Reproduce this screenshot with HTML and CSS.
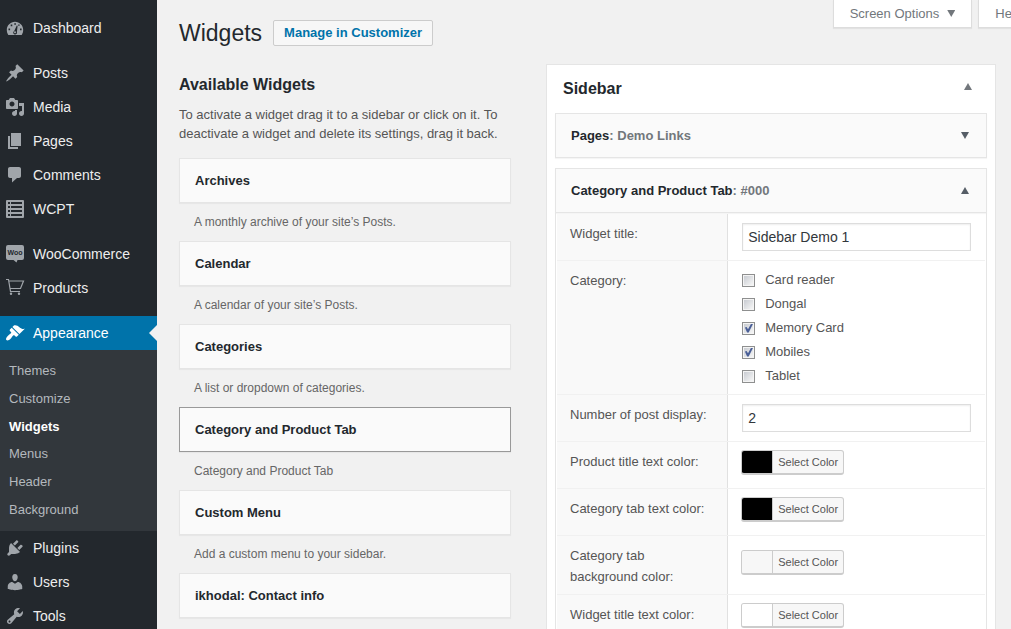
FILE: index.html
```html
<!DOCTYPE html>
<html lang="en">
<head>
<meta charset="utf-8">
<title>Widgets</title>
<link rel="stylesheet" href="styles.css">
</head>
<body>
<div class="admin">
  <nav class="menu" aria-label="Main menu">
    <ul class="menu-group">
      <li><a class="menu-item" href="#"><svg class="icon" viewBox="0 0 20 20"><path fill-rule="evenodd" d="M3.300 17h13.400c.9-1.300 1.500-3.100 1.500-4.900C18.200 7.400 14.500 3.800 10 3.800S1.800 7.400 1.800 12.100c0 1.800.6 3.600 1.500 4.900zM9.300 5.200h1.600v1.600H9.300zM5.700 6.600h1.600v1.600H5.700zM13.200 6.400h1.400v1.400h-1.400zM3.500 10.600h1.600v1.600H3.500zM15 10.600h1.600v1.600H15zM11.800 7.500l.8.300-.7 6.100a1.900 1.900 0 1 1-2.700-1z"/><circle cx="10" cy="14.200" r="1"/></svg>Dashboard</a></li>
    </ul>
    <ul class="menu-group">
      <li><a class="menu-item" href="#"><svg class="icon" viewBox="0 0 20 20"><path d="M10.440 3.020l1.820-1.820 6.360 6.350-1.830 1.820c-1.050-.68-2.480-.57-3.410.36l-.75.75c-.92.93-1.040 2.350-.35 3.410l-1.830 1.820-2.410-2.410-2.800 2.790c-.42.42-3.380 2.710-3.800 2.290s1.860-3.390 2.280-3.810l2.790-2.790L4.100 9.360l1.830-1.820c1.050.69 2.480.57 3.400-.36l.75-.75c.93-.92 1.050-2.350.36-3.410z"/></svg>Posts</a></li>
      <li><a class="menu-item" href="#"><svg class="icon" viewBox="0 0 20 20"><path fill-rule="evenodd" d="M13 11V4c0-.55-.45-1-1-1h-1.670L9 1H5L3.670 3H2c-.55 0-1 .45-1 1v7c0 .55.45 1 1 1h10c.55 0 1-.45 1-1zM7 4.500c1.380 0 2.500 1.120 2.500 2.500S8.380 9.500 7 9.500 4.500 8.380 4.500 7 5.620 4.500 7 4.500zM14 6h5v10.500c0 1.380-1.120 2.500-2.500 2.500S14 17.880 14 16.500s1.120-2.500 2.500-2.500c.17 0 .34.02.5.05V9h-3V6zm-4 8.050V13h2v3.500c0 1.380-1.120 2.500-2.500 2.500S7 17.880 7 16.500 8.120 14 9.500 14c.17 0 .34.02.5.05z"/></svg>Media</a></li>
      <li><a class="menu-item" href="#"><svg class="icon" viewBox="0 0 20 20"><path d="M6 15V2h10v13H6zm-1 1h8v2H3V5h2v11z"/></svg>Pages</a></li>
      <li><a class="menu-item" href="#"><svg class="icon" viewBox="0 0 20 20"><path d="M5 2h9c1.100 0 2 .9 2 2v7c0 1.100-.9 2-2 2h-2l-5 4.500V13H5c-1.100 0-2-.9-2-2V4c0-1.100.9-2 2-2z"/></svg>Comments</a></li>
      <li><a class="menu-item" href="#"><svg class="icon" viewBox="0 0 20 20"><path fill-rule="evenodd" d="M2 1h16q1 0 1 1v16q0 1-1 1H2q-1 0-1-1V2q0-1 1-1zM3 3v2h2V3zM6 3v2h11V3zM3 7v2h2V7zM6 7v2h11V7zM3 11v2h2v-2zM6 11v2h11v-2zM3 15v2h2v-2zM6 15v2h11v-2z"/></svg>WCPT</a></li>
    </ul>
    <ul class="menu-group">
      <li><a class="menu-item" href="#"><svg class="icon" viewBox="0 0 20 20"><path d="M3 1h14q2 0 2 2v11q0 2-2 2h-4.500l-1 2.500-3-2.500H3q-2 0-2-2V3q0-2 2-2z"/><text class="woo" x="10" y="11" text-anchor="middle">Woo</text></svg>WooCommerce</a></li>
      <li><a class="menu-item" href="#"><svg class="icon" viewBox="0 0 20 20"><path class="stroke" d="M1 1.500h2.500L5.500 13.500H15M4 3h14.500L15.500 10.500H5"/><circle cx="6" cy="15.800" r="1.200"/><circle cx="14" cy="15.800" r="1.200"/></svg>Products</a></li>
    </ul>
    <ul class="menu-group menu-group-last">
      <li><a class="menu-item menu-item-current" href="#"><svg class="icon" viewBox="0 0 20 20"><path d="M14.480 11.060L7.410 3.990l1.500-1.500c.5-.56 2.300-.47 3.510.32 1.210.8 1.430 1.280 2.910 2.100 1.180.64 2.450 1.260 4.450.85zm-.71.71L6.700 4.700 4.930 6.470c-.39.39-.39 1.020 0 1.410l1.060 1.060c.39.39.39 1.030 0 1.420-.6.6-1.430 1.110-2.210 1.690-.35.26-.7.53-1.010.84C1.430 14.230.4 16.080 1.400 17.070c.99 1 2.840-.03 4.180-1.360.31-.31.58-.66.85-1.020.57-.78 1.080-1.610 1.690-2.210.39-.39 1.020-.39 1.410 0l1.060 1.060c.39.39 1.020.39 1.410 0z"/></svg>Appearance</a>
        <ul class="submenu">
          <li><a href="#">Themes</a></li>
          <li><a href="#">Customize</a></li>
          <li><a class="submenu-current" href="#">Widgets</a></li>
          <li><a href="#">Menus</a></li>
          <li><a href="#">Header</a></li>
          <li><a href="#">Background</a></li>
        </ul>
      </li>
      <li><a class="menu-item" href="#"><svg class="icon" viewBox="0 0 20 20"><path d="M13.110 4.360L9.870 7.600 8 5.730l3.240-3.240c.35-.34 1.050-.2 1.560.32.52.51.66 1.210.31 1.550zm-8 1.770l.91-1.120 9.010 9.010-1.190.84c-.71.71-2.630 1.160-3.820 1.160H6.140L4.900 17.260c-.59.59-1.540.59-2.120 0-.59-.58-.59-1.530 0-2.120l1.240-1.240v-3.880c0-1.130.4-3.190 1.090-3.890zm7.260 3.970l3.240-3.240c.34-.35 1.040-.21 1.550.31.52.51.66 1.210.31 1.550l-3.240 3.250z"/></svg>Plugins</a></li>
      <li><a class="menu-item" href="#"><svg class="icon" viewBox="0 0 20 20"><path d="M10 9.250c-2.270 0-2.730-3.440-2.730-3.440C7 4.020 7.820 2 9.970 2c2.160 0 2.980 2.020 2.710 3.810 0 0-.41 3.440-2.680 3.440zm0 2.570L12.720 10c2.390 0 4.520 2.330 4.520 4.530v2.490s-3.650 1.130-7.240 1.130c-3.650 0-7.240-1.130-7.240-1.130v-2.490c0-2.250 1.940-4.480 4.470-4.480z"/></svg>Users</a></li>
      <li><a class="menu-item" href="#"><svg class="icon" viewBox="0 0 20 20"><path fill-rule="evenodd" d="M16.680 9.770c-1.340 1.340-3.300 1.670-4.950.99l-5.410 6.520c-.99.99-2.590.99-3.580 0s-.99-2.590 0-3.570l6.520-5.420c-.68-1.650-.35-3.610.99-4.950 1.280-1.280 3.120-1.620 4.720-1.060l-2.890 2.890 2.820 2.820 2.860-2.870c.53 1.580.18 3.390-1.080 4.650zM3.810 16.210c.4.39 1.040.39 1.430 0 .4-.4.4-1.040 0-1.430-.39-.4-1.030-.4-1.430 0-.39.39-.39 1.030 0 1.430z"/></svg>Tools</a></li>
    </ul>
  </nav>

  <main class="content">
    <header class="page-header">
      <div class="page-title">
        <h1>Widgets</h1>
        <a class="title-action" href="#">Manage in Customizer</a>
      </div>
      <div class="screen-tabs">
        <button class="screen-tab" type="button">Screen Options <span class="arrow arrow-down"></span></button>
        <button class="screen-tab" type="button">Help <span class="arrow arrow-down"></span></button>
      </div>
    </header>

    <div class="columns">
      <section class="available">
        <h2>Available Widgets</h2>
        <p class="intro">To activate a widget drag it to a sidebar or click on it. To deactivate a widget and delete its settings, drag it back.</p>
        <article><h3 class="card">Archives</h3><p class="card-note">A monthly archive of your site’s Posts.</p></article>
        <article><h3 class="card">Calendar</h3><p class="card-note">A calendar of your site’s Posts.</p></article>
        <article><h3 class="card">Categories</h3><p class="card-note">A list or dropdown of categories.</p></article>
        <article><h3 class="card card-active">Category and Product Tab</h3><p class="card-note">Category and Product Tab</p></article>
        <article><h3 class="card">Custom Menu</h3><p class="card-note">Add a custom menu to your sidebar.</p></article>
        <article><h3 class="card">ikhodal: Contact info</h3></article>
      </section>

      <section class="panel">
        <header class="panel-header"><h2>Sidebar</h2><button class="toggle" type="button" aria-label="Collapse Sidebar"><span class="arrow arrow-up arrow-soft"></span></button></header>
        <h3 class="card card-row"><span>Pages<span class="muted">: Demo Links</span></span><button class="toggle" type="button" aria-label="Expand Pages"><span class="arrow arrow-down"></span></button></h3>
        <div class="widget-open">
          <h3 class="card card-row"><span>Category and Product Tab<span class="muted">: #000</span></span><button class="toggle" type="button" aria-label="Collapse Category and Product Tab"><span class="arrow arrow-up"></span></button></h3>
          <form class="fields">
            <div class="field"><div class="field-label"><label for="title">Widget title:</label></div><div class="field-value"><input class="text" id="title" type="text" value="Sidebar Demo 1"></div></div>
            <div class="field"><div class="field-label" id="cat">Category:</div>
              <div class="field-value checks" role="group" aria-labelledby="cat">
                <label><input type="checkbox">Card reader</label>
                <label><input type="checkbox">Dongal</label>
                <label><input type="checkbox" checked>Memory Card</label>
                <label><input type="checkbox" checked>Mobiles</label>
                <label><input type="checkbox">Tablet</label>
              </div></div>
            <div class="field"><div class="field-label"><label for="count">Number of post display:</label></div><div class="field-value"><input class="text" id="count" type="text" value="2"></div></div>
            <div class="field"><div class="field-label"><label for="c1">Product title text color:</label></div><div class="field-value pick"><button class="color" id="c1" type="button"><span class="swatch black"></span><span class="color-text">Select Color</span></button></div></div>
            <div class="field"><div class="field-label"><label for="c2">Category tab text color:</label></div><div class="field-value pick"><button class="color" id="c2" type="button"><span class="swatch black"></span><span class="color-text">Select Color</span></button></div></div>
            <div class="field"><div class="field-label"><label for="c3">Category tab background color:</label></div><div class="field-value pick"><button class="color" id="c3" type="button"><span class="swatch grey"></span><span class="color-text">Select Color</span></button></div></div>
            <div class="field"><div class="field-label"><label for="c4">Widget title text color:</label></div><div class="field-value pick"><button class="color" id="c4" type="button"><span class="swatch"></span><span class="color-text">Select Color</span></button></div></div>
          </form>
        </div>
      </section>
    </div>
  </main>
</div>
</body>
</html>
```
FILE: styles.css
```css
* { box-sizing: border-box; }
body {
  margin: 0;
  background: #f1f1f1;
  color: #555;
  font: 13px/21px "Liberation Sans", Arial, sans-serif;
}
html, body { height: 100%; overflow: hidden; }
h1, h2, h3, p, ul { margin: 0; padding: 0; }
ul { list-style: none; }
a { text-decoration: none; }
button, input { font-family: inherit; margin: 0; }

.admin { display: flex; height: 100%; }

/* Left menu */
.menu { flex: 0 0 157px; padding-top: 11px; background: #23282d; overflow: hidden; }
.menu-group { margin-bottom: 11px; }
.menu-item {
  position: relative;
  display: flex;
  align-items: center;
  gap: 8px;
  height: 34px;
  padding-left: 5px;
  color: #eee;
  font-size: 14px;
}
.icon { flex: none; width: 20px; height: 20px; fill: #a0a5aa; }
.icon .stroke { fill: none; stroke: #a0a5aa; stroke-width: 1.2; }
.icon .woo { fill: #23282d; font-size: 7px; font-weight: bold; }
.menu-item-current { background: #0073aa; color: #fff; }
.menu-item-current .icon { fill: #fff; }
.menu-item-current::after {
  content: "";
  position: absolute;
  right: 0;
  top: 9px;
  border: 8px solid transparent;
  border-left-width: 0;
  border-right-color: #f1f1f1;
}
.submenu {
  display: grid;
  grid-auto-rows: 1fr;
  align-items: center;
  min-height: 181px;
  padding: 7px 9px 8px;
  background: #32373c;
}
.submenu a { color: #b4b9be; }
.submenu .submenu-current { color: #fff; font-weight: bold; }

/* Page header */
.content { flex: 1; min-width: 0; padding-left: 22px; overflow: hidden; }
.page-header { display: flex; align-items: flex-start; justify-content: space-between; height: 64px; }
.page-title { display: flex; align-items: center; gap: 11px; padding-top: 20px; }
h1 { color: #23282d; font-size: 23px; font-weight: normal; line-height: 26px; }
.title-action {
  padding: 2px 10px;
  border: 1px solid #ccc;
  border-radius: 2px;
  background: #f7f7f7;
  color: #0073aa;
  font-weight: bold;
  line-height: 20px;
  white-space: nowrap;
}
.screen-tabs { display: flex; gap: 6px; margin-right: -52px; }
.screen-tab {
  display: flex;
  align-items: center;
  gap: 8px;
  height: 28px;
  padding: 0 16px;
  border: 1px solid #ddd;
  border-top: 0;
  background: #fff;
  box-shadow: 0 1px 1px rgba(0, 0, 0, .06);
  color: #72777c;
  font-size: 13px;
  white-space: nowrap;
}
.screen-tabs { margin-right: -44px; }
.arrow { display: block; width: 8px; height: 7px; background: #555d66; }
.arrow-down { clip-path: polygon(0 0, 100% 0, 50% 100%); }
.arrow-up { clip-path: polygon(50% 0, 100% 100%, 0 100%); }
.arrow-soft, .screen-tab .arrow { background: #72777c; }

/* Columns */
.columns {
  display: grid;
  grid-template-columns: minmax(0, 332fr) minmax(0, 450fr);
  gap: 35px;
  align-items: start;
  padding-right: 15px;
}
h2 { color: #23282d; font-size: 16px; line-height: 24px; }
.available { padding-top: 9px; }
.intro { margin: 8px 0 15px; line-height: 19px; }
.card {
  padding: 12px 15px;
  border: 1px solid #e5e5e5;
  background: #fafafa;
  box-shadow: 0 1px 1px rgba(0, 0, 0, .04);
  color: #23282d;
  font-size: 13px;
  line-height: 19px;
}
.card-active { border-color: #999; }
.card-note { padding: 9px 15px 8px; color: #666; font-size: 12px; }
.card-row { display: flex; align-items: center; justify-content: space-between; padding-right: 9px; }
.muted { color: #72777c; }
.toggle { display: block; padding: 6px 8px; border: 0; background: none; }

.panel { padding: 0 8px 10px; border: 1px solid #e5e5e5; background: #fff; }
.panel-header { display: flex; justify-content: space-between; align-items: flex-start; padding: 12px 7px 12px 8px; }
.widget-open { margin-top: 10px; }

/* Widget form */
.fields { padding: 1px 1px 0; border: 1px solid #e5e5e5; border-top: 0; }
.field { display: flex; min-height: 47px; border-bottom: 1px solid #f1f1f1; }
.field-label { flex: 0 0 40%; padding: 9px 13px 7px; border-right: 1px solid #e1e1e1; background: #f9f9f9; }
.field-value { flex: 1; min-width: 0; padding: 9px 14px 0; }
.text {
  display: block;
  width: 100%;
  height: 28px;
  padding: 3px 5px;
  border: 1px solid #ddd;
  background: #fff;
  box-shadow: inset 0 1px 2px rgba(0, 0, 0, .07);
  color: #32373c;
  font-size: 14px;
}
.checks { padding: 7px 14px 6px; }
.checks label { display: flex; align-items: center; gap: 10px; line-height: 24px; }
.checks input {
  appearance: none;
  width: 13px;
  height: 13px;
  border: 1px solid #8e8f8f;
  background: linear-gradient(135deg, #c9ccd2, #f6f6f6) content-box, #f4f4f4;
  padding: 1px;
}
.checks input:checked::after {
  content: "";
  display: block;
  width: 9px;
  height: 9px;
  background: #4a5f97;
  clip-path: polygon(8% 45%, 28% 40%, 42% 65%, 78% 0, 100% 0, 50% 100%, 32% 100%);
}
.pick { display: flex; align-items: center; padding: 0 13px 6px; }
.color {
  display: flex;
  height: 25px;
  padding: 0;
  border: 1px solid #ccc;
  border-bottom-width: 2px;
  border-radius: 3px;
  overflow: hidden;
  background: #f7f7f7;
  color: #555;
  font-size: 11px;
  line-height: 22px;
}
.swatch { width: 30px; height: 22px; background: #fff; }
.black { background: #000; }
.grey { background: #f7f7f7; }
.color-text { padding: 0 5px; border-left: 1px solid #ccc; }
```
